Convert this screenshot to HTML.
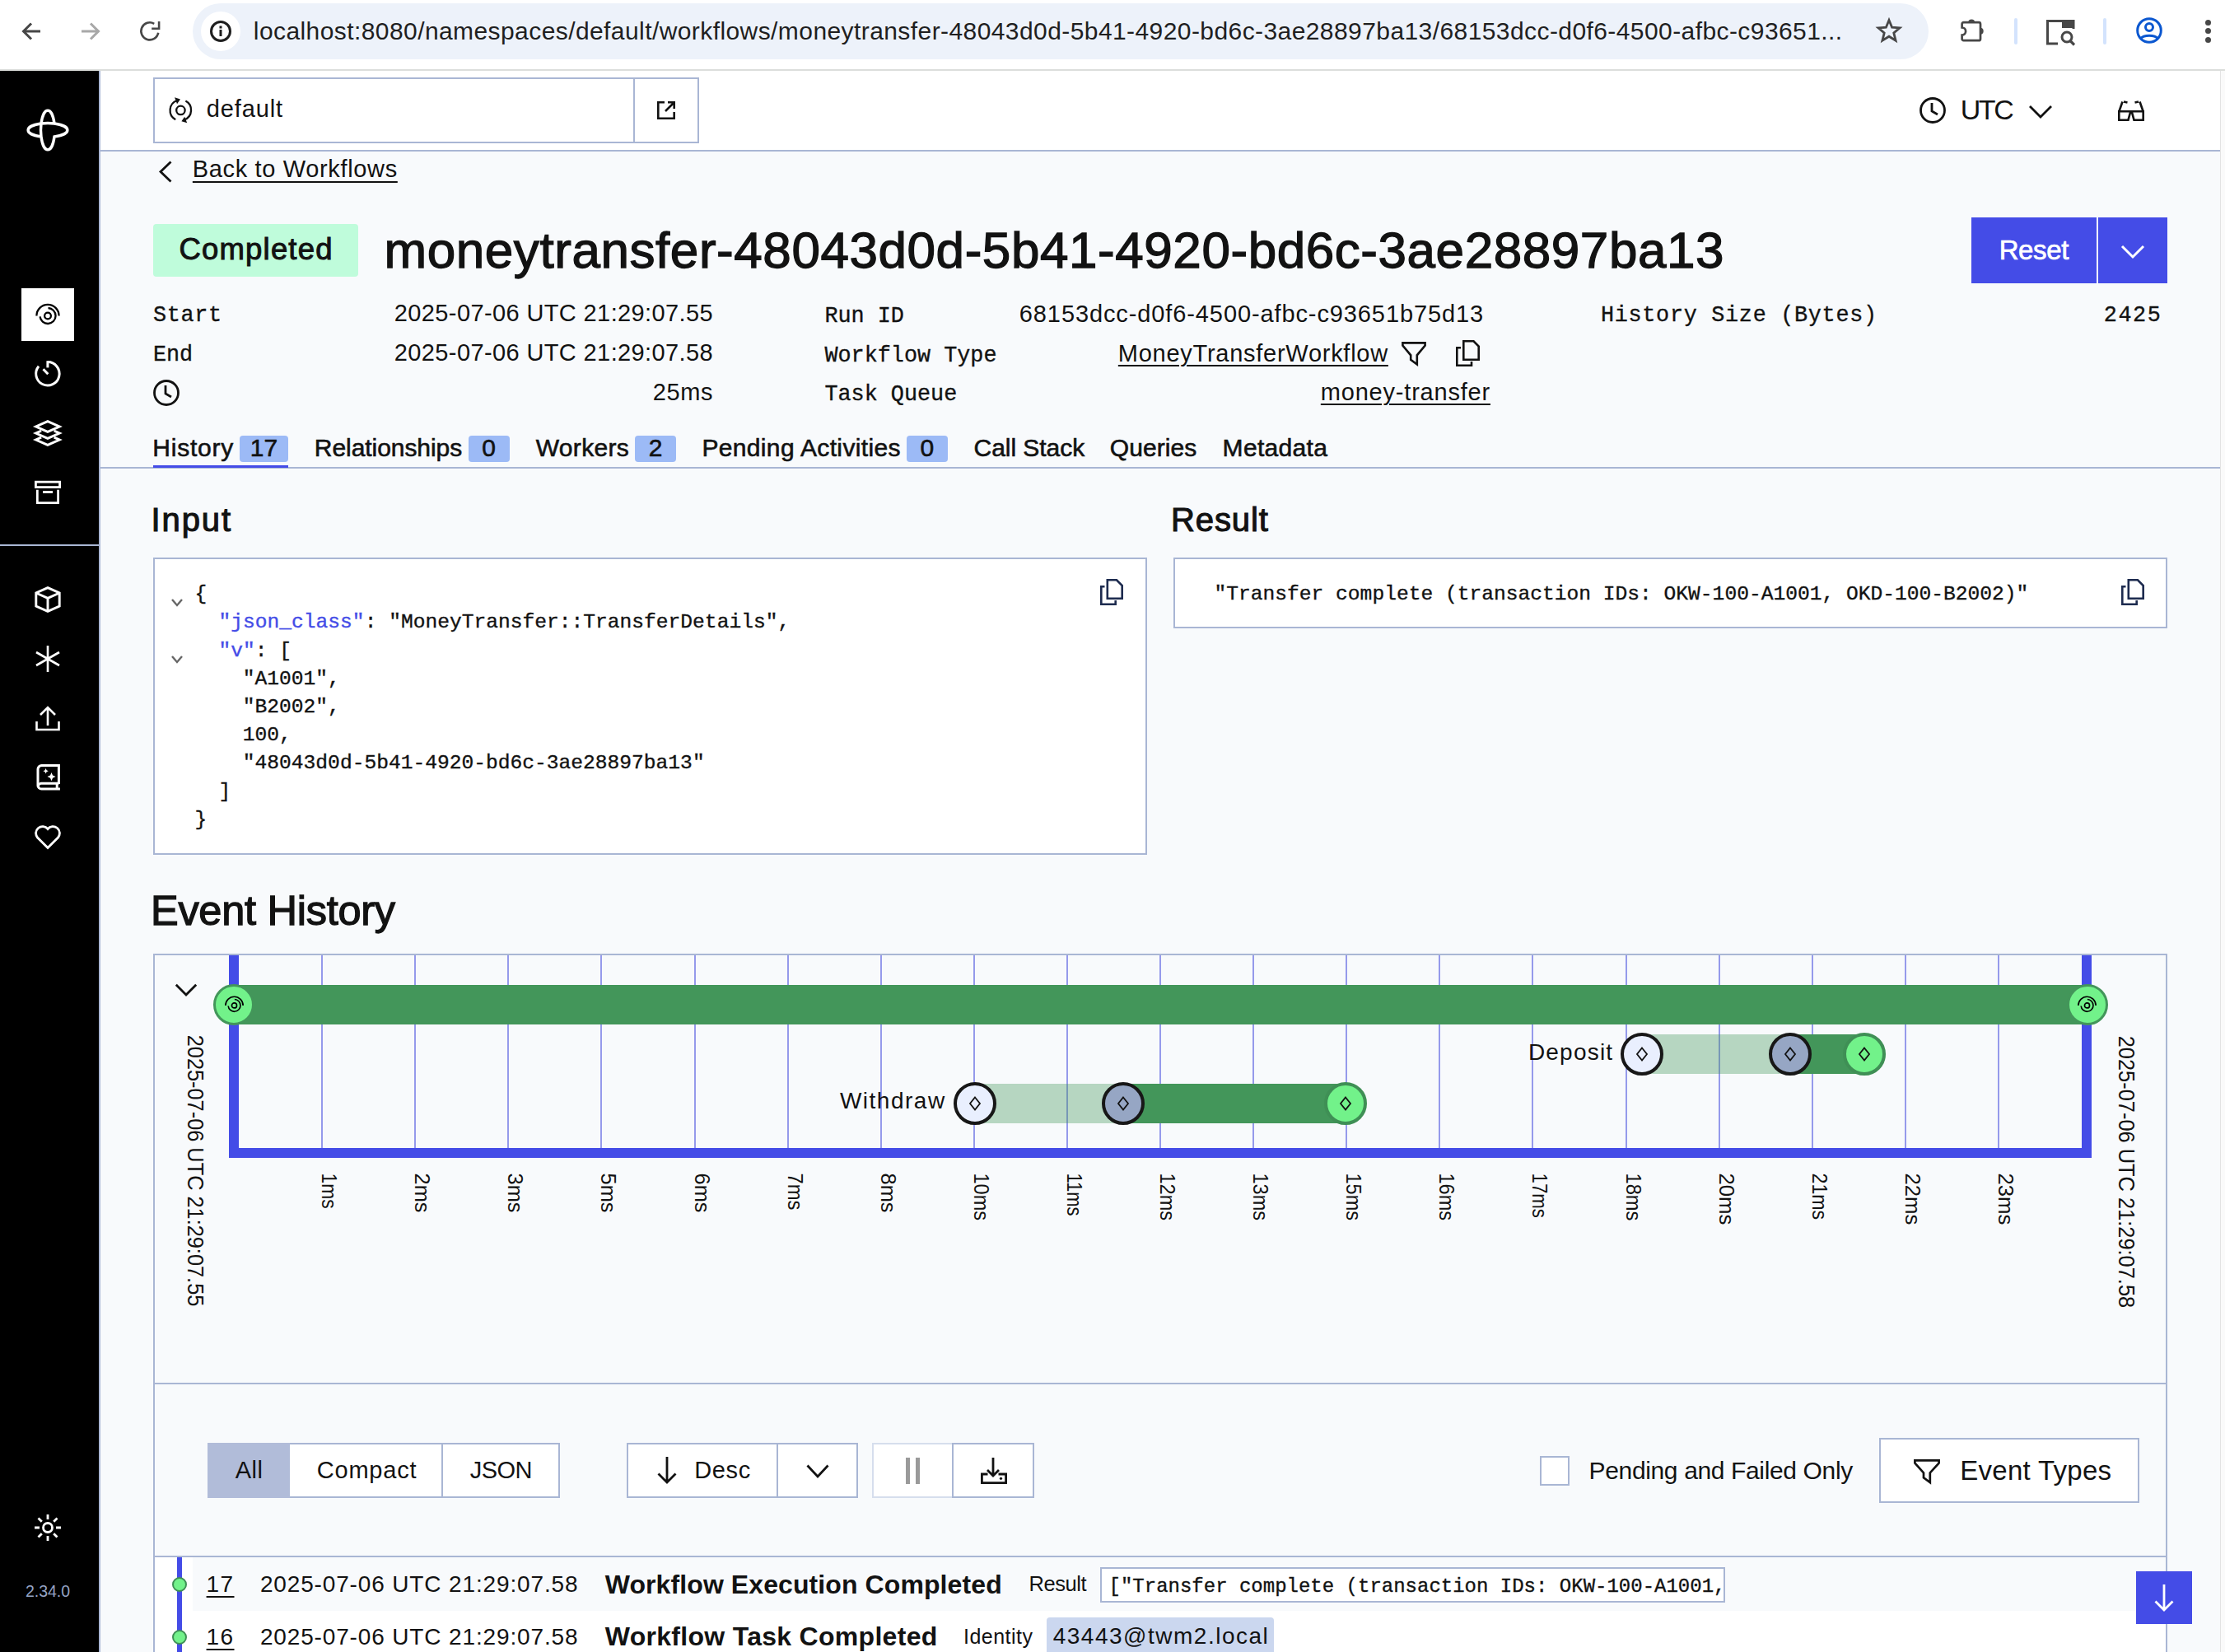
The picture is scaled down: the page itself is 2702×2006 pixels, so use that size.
<!DOCTYPE html>
<html><head><meta charset="utf-8"><title>Temporal</title><style>
html,body{margin:0;padding:0}
body{width:2702px;height:2006px;overflow:hidden;position:relative;background:#f8fafc;font-family:"Liberation Sans",sans-serif;color:#121212}
.a{position:absolute;box-sizing:border-box}
.t{position:absolute;white-space:pre;line-height:1}
svg{position:absolute;overflow:visible}

</style></head><body>
<!-- browser chrome -->
<div class="a" style="left:0;top:0;width:2702px;height:84px;background:#ffffff"></div>
<div class="a" style="left:0;top:84px;width:2702px;height:2px;background:#dcdedb"></div>
<svg style="left:26px;top:26px" width="24" height="24" viewBox="0 0 24 24"><path d="M23 12H3M12 2.5L2.5 12L12 21.5" fill="none" stroke="#474747" stroke-width="3"/></svg>
<svg style="left:98px;top:26px" width="24" height="24" viewBox="0 0 24 24"><path d="M1 12H21M12 2.5L21.5 12L12 21.5" fill="none" stroke="#a8a8a8" stroke-width="3"/></svg>
<svg style="left:170px;top:26px" width="24" height="24" viewBox="0 0 24 24"><path d="M22.2 13.7A10.5 10.5 0 1 1 17.2 2.8" fill="none" stroke="#474747" stroke-width="2.6"/><path d="M14.2 8.7H23.1V0" fill="none" stroke="#474747" stroke-width="2.6"/></svg>
<div class="a" style="left:234px;top:4px;width:2108px;height:68px;border-radius:34px;background:#edf2fa"></div>
<div class="a" style="left:244px;top:14px;width:48px;height:48px;border-radius:24px;background:#ffffff"></div>
<svg style="left:255px;top:25px" width="26" height="26" viewBox="0 0 26 26"><circle cx="13" cy="13" r="11.5" fill="none" stroke="#1f1f1f" stroke-width="3"/><rect x="11.5" y="11" width="3" height="8" fill="#1f1f1f"/><rect x="11.5" y="6.5" width="3" height="3" fill="#1f1f1f"/></svg>
<svg style="left:2279px;top:22px" width="30" height="30" viewBox="0 0 30 30"><path d="M15 2.5L18.6 11.2L28 11.9L20.8 18L23.1 27.2L15 22.2L6.9 27.2L9.2 18L2 11.9L11.4 11.2Z" fill="none" stroke="#474747" stroke-width="2.8" stroke-linejoin="miter"/></svg>
<svg style="left:2380px;top:20px" width="34" height="32" viewBox="0 0 34 32"><path d="M2.6 9.2A2 2 0 0 1 4.6 7.2H23A2 2 0 0 1 25 9.2V27.2A2 2 0 0 1 23 29.2H4.6A2 2 0 0 1 2.6 27.2V22.5A4.5 4.5 0 0 0 2.6 13.5Z" fill="none" stroke="#474747" stroke-width="2.7"/><path d="M10.2 7.5A4 4 0 0 1 18.2 7.5Z" fill="#474747"/><path d="M24.7 13.8A4 4 0 0 1 24.7 21.8Z" fill="#474747"/></svg>
<div class="a" style="left:2446px;top:22px;width:4px;height:32px;border-radius:2px;background:#d3e3fd"></div>
<svg style="left:2485px;top:24px" width="36" height="32" viewBox="0 0 36 32"><path d="M14 29H1.5V1.5H33V11" fill="none" stroke="#474747" stroke-width="3"/><rect x="19" y="0" width="14.5" height="10" fill="#474747"/><circle cx="25" cy="21" r="6" fill="none" stroke="#474747" stroke-width="3"/><path d="M29 25.5L34 30.5" stroke="#474747" stroke-width="3.2"/></svg>
<div class="a" style="left:2554px;top:22px;width:4px;height:32px;border-radius:2px;background:#d3e3fd"></div>
<svg style="left:2594px;top:21px" width="32" height="32" viewBox="0 0 32 32"><circle cx="16" cy="16" r="14.3" fill="none" stroke="#0b57d0" stroke-width="3"/><circle cx="16" cy="12" r="4.5" fill="none" stroke="#0b57d0" stroke-width="3"/><path d="M6 25.5C9 21 23 21 26 25.5" fill="none" stroke="#0b57d0" stroke-width="3"/></svg>
<div class="a" style="left:2678px;top:23.5px;width:7px;height:7px;border-radius:4px;background:#474747"></div>
<div class="a" style="left:2678px;top:33.5px;width:7px;height:7px;border-radius:4px;background:#474747"></div>
<div class="a" style="left:2678px;top:44.5px;width:7px;height:7px;border-radius:4px;background:#474747"></div>

<!-- sidebar -->
<div class="a" style="left:0;top:86px;width:120px;height:1920px;background:#000000"></div>
<div class="a" style="left:120px;top:86px;width:2px;height:1920px;background:#a9b6d4"></div>
<div class="a" style="left:0;top:661px;width:120px;height:2px;background:#a9b6d4"></div>
<svg style="left:34px;top:134px" width="48" height="48" viewBox="0 0 48 48"><path d="M16 16A8.5 24 0 0 1 32 16A24 8.5 0 0 1 32 32A8.5 24 0 0 1 16 32A24 8.5 0 0 1 16 16Z M16 16A8.5 24 0 0 0 16 32 M16 16A24 8.5 0 0 1 32 16" fill="none" stroke="#fff" stroke-width="3.4"/></svg>
<div class="a" style="left:26px;top:350px;width:64px;height:64px;background:#ffffff"></div>
<!-- workflows icon -->
<svg style="left:42px;top:367px" width="32" height="32" viewBox="0 0 32 32"><path d="M2.4 16.5A13.6 13.6 0 0 1 29.6 16.5" fill="none" stroke="#000" stroke-width="2.3"/><path d="M16.5 7A9.5 9.5 0 1 1 6.6 17.3" fill="none" stroke="#000" stroke-width="2.3"/><circle cx="16" cy="16.5" r="3.9" fill="none" stroke="#000" stroke-width="2.3"/></svg>
<!-- schedules -->
<svg style="left:42px;top:437px" width="32" height="32" viewBox="0 0 32 32"><path d="M15.9 2.6A14.2 14.2 0 1 1 5 7.7" fill="none" stroke="#fff" stroke-width="3"/><path d="M15.9 1.2V9.4" fill="none" stroke="#fff" stroke-width="3"/><path d="M10.5 11.3L16.3 17.3" fill="none" stroke="#fff" stroke-width="3"/></svg>
<!-- layers -->
<svg style="left:42px;top:509px" width="32" height="34" viewBox="0 0 32 34"><path d="M15.9 2.6L30.2 9L15.9 15.4L1.6 9Z" fill="none" stroke="#fff" stroke-width="3"/><path d="M8.1 14.1L1.6 17L15.9 23.4L30.2 17L23.7 14.1" fill="none" stroke="#fff" stroke-width="3"/><path d="M8.1 22.1L1.6 25L15.9 31.4L30.2 25L23.7 22.1" fill="none" stroke="#fff" stroke-width="3"/></svg>
<!-- archive -->
<svg style="left:42px;top:582px" width="32" height="32" viewBox="0 0 32 32"><rect x="1.4" y="3.2" width="29.2" height="6.4" fill="none" stroke="#fff" stroke-width="2.8"/><path d="M3.3 12.8V28.6H28.6V12.8" fill="none" stroke="#fff" stroke-width="2.8"/><path d="M10 15.5H22" stroke="#fff" stroke-width="2.8"/></svg>
<!-- cube -->
<svg style="left:42px;top:712px" width="32" height="32" viewBox="0 0 32 32"><path d="M16 1.6L30.2 8V24L16 30.4L1.8 24V8Z" fill="none" stroke="#fff" stroke-width="2.9" stroke-linejoin="miter"/><path d="M1.8 8L16 14.4L30.2 8M16 14.4V30.4" fill="none" stroke="#fff" stroke-width="2.9"/></svg>
<!-- asterisk -->
<svg style="left:42px;top:784px" width="32" height="32" viewBox="0 0 32 32"><path d="M16 0V32M2 8L30 24M2 24L30 8" stroke="#fff" stroke-width="2.6"/></svg>
<!-- upload -->
<svg style="left:42px;top:856px" width="32" height="32" viewBox="0 0 32 32"><path d="M16 25V3M7 12L16 3L25 12" fill="none" stroke="#fff" stroke-width="2.6"/><path d="M2.5 20V30H29.5V20" fill="none" stroke="#fff" stroke-width="2.6"/></svg>
<!-- book -->
<svg style="left:42px;top:927px" width="32" height="34" viewBox="0 0 32 34"><path d="M29.4 25V2.6H8.5A4.5 4.5 0 0 0 4 7.1V26.6A4.4 4.4 0 0 0 8.4 31H30.9" fill="none" stroke="#fff" stroke-width="3"/><path d="M4.2 28.2A3.8 3.8 0 0 1 8 24.3H29.4M27.2 24.3V31" fill="none" stroke="#fff" stroke-width="3"/><path d="M13.6 6L14.6 8.2L16.8 9.2L14.6 10.2L13.6 12.4L12.6 10.2L10.4 9.2L12.6 8.2Z" fill="#fff"/><path d="M20.5 11L22 14.5L25.5 16.1L22 17.7L20.5 21.2L19 17.7L15.5 16.1L19 14.5Z" fill="#fff"/></svg>
<!-- heart -->
<svg style="left:42px;top:1000px" width="32" height="32" viewBox="0 0 32 32"><path d="M16 29.5L3.5 17A7.8 7.8 0 0 1 16 6.5A7.8 7.8 0 0 1 28.5 17Z" fill="none" stroke="#fff" stroke-width="2.8" stroke-linejoin="miter"/></svg>
<!-- sun -->
<svg style="left:42px;top:1839px" width="32" height="32" viewBox="0 0 32 32"><circle cx="16" cy="16" r="5.5" fill="none" stroke="#fff" stroke-width="2.8"/><path d="M16 0V6M16 26V32M0 16H6M26 16H32M4.5 4.5L8.8 8.8M23.2 23.2L27.5 27.5M4.5 27.5L8.8 23.2M23.2 8.8L27.5 4.5" stroke="#fff" stroke-width="2.8"/></svg>

<!-- header -->
<div class="a" style="left:122px;top:86px;width:2574px;height:96px;background:#ffffff"></div>
<div class="a" style="left:122px;top:182px;width:2574px;height:2px;background:#a9b6d4"></div>
<div class="a" style="left:186px;top:94px;width:663px;height:80px;border:2px solid #a9b6d4;background:#fff"></div>
<div class="a" style="left:769px;top:94px;width:2px;height:80px;background:#a9b6d4"></div>
<svg style="left:200px;top:114px" width="40" height="40" viewBox="0 0 40 40"><circle cx="19.4" cy="19.9" r="5.2" fill="none" stroke="#121212" stroke-width="2.3"/><path d="M13.2 31.2A12.7 12.7 0 0 1 15.2 8" fill="none" stroke="#121212" stroke-width="2.3"/><path d="M12 4.2L19 6.4L15 12.2Z" fill="#121212"/><path d="M25.4 8.4A12.7 12.7 0 0 1 24 31.4" fill="none" stroke="#121212" stroke-width="2.3"/><path d="M20.4 33.2L27.2 35.2L24.2 27.8Z" fill="#121212"/></svg>
<svg style="left:798px;top:123px" width="22" height="22" viewBox="0 0 22 22"><path d="M9 1.3H1.3V20.7H20.7V13" fill="none" stroke="#121212" stroke-width="2.6"/><path d="M10 12L20.5 1.5M13 1.3H20.7V9" fill="none" stroke="#121212" stroke-width="2.6"/></svg>
<svg style="left:2331px;top:118px" width="32" height="32" viewBox="0 0 32 32"><circle cx="16" cy="16" r="14.5" fill="none" stroke="#121212" stroke-width="2.8"/><path d="M15 7V17L22 21" fill="none" stroke="#121212" stroke-width="2.8"/></svg>
<svg style="left:2464px;top:128px" width="28" height="16" viewBox="0 0 28 16"><path d="M1 1L14 14L27 1" fill="none" stroke="#121212" stroke-width="2.8"/></svg>
<svg style="left:2572px;top:122px" width="32" height="25" viewBox="0 0 32 25"><path d="M7 1.5L11.5 2.5M25 1.5L20.5 2.5M5.5 1.5L1.5 13M26.5 1.5L30.5 13" fill="none" stroke="#121212" stroke-width="2.6"/><path d="M1.3 13.3H30.7V23.7H19.5L17 14.5H15L12.5 23.7H1.3Z" fill="none" stroke="#121212" stroke-width="2.6"/></svg>
<!-- scrollbar -->
<div class="a" style="left:2696px;top:86px;width:6px;height:1920px;background:#fafafa;border-left:1px solid #e3e3e3"></div>

<!-- back chevron -->
<svg style="left:192px;top:195px" width="17" height="27" viewBox="0 0 17 27"><path d="M15.5 1.5L3 13.5L15.5 25.5" fill="none" stroke="#121212" stroke-width="2.8"/></svg>
<!-- completed badge -->
<div class="a" style="left:186px;top:272px;width:249px;height:64px;border-radius:4px;background:#bffcdb"></div>
<!-- reset -->
<div class="a" style="left:2394px;top:264px;width:152px;height:80px;background:#444ce7"></div>
<div class="a" style="left:2548px;top:264px;width:84px;height:80px;background:#444ce7"></div>
<svg style="left:2576px;top:298px" width="28" height="16" viewBox="0 0 28 16"><path d="M1 1L14 14L27 1" fill="none" stroke="#fff" stroke-width="3"/></svg>
<!-- details icons -->
<svg style="left:186px;top:461px" width="32" height="32" viewBox="0 0 32 32"><circle cx="16" cy="16" r="14.5" fill="none" stroke="#121212" stroke-width="2.8"/><path d="M15 7V17L22 21" fill="none" stroke="#121212" stroke-width="2.8"/></svg>
<svg style="left:1702px;top:415px" width="30" height="29" viewBox="0 0 30 29"><path d="M1.4 1.4H28.6V4.5L18.8 16.3V27.5L11.2 21.8V16.3L1.4 4.5Z" fill="none" stroke="#121212" stroke-width="2.6" stroke-linejoin="miter"/></svg>
<svg style="left:1768px;top:413px" width="29" height="32" viewBox="0 0 29 32"><path d="M9.3 1.3H21.5L27.7 7.5V23.7H9.3Z" fill="none" stroke="#121212" stroke-width="2.6"/><path d="M6 9.3H1.3V30.7H19V26" fill="none" stroke="#121212" stroke-width="2.6"/></svg>
<!-- tabs -->
<div class="a" style="left:291px;top:529px;width:59px;height:32px;border-radius:4px;background:#9cbaf6"></div>
<div class="a" style="left:569px;top:529px;width:49.5px;height:32px;border-radius:4px;background:#9cbaf6"></div>
<div class="a" style="left:771px;top:529px;width:50px;height:32px;border-radius:4px;background:#9cbaf6"></div>
<div class="a" style="left:1101px;top:529px;width:50px;height:32px;border-radius:4px;background:#9cbaf6"></div>
<div class="a" style="left:122px;top:567px;width:2574px;height:2px;background:#a9b6d4"></div>
<div class="a" style="left:186px;top:565px;width:164px;height:3px;background:#444ce7"></div>

<!-- input box -->
<div class="a" style="left:186px;top:677px;width:1207px;height:361px;border:2px solid #a9b6d4;background:#fff"></div>
<svg style="left:208px;top:727px" width="14" height="10" viewBox="0 0 14 10"><path d="M1 1L7 8L13 1" fill="none" stroke="#666" stroke-width="2.4"/></svg>
<svg style="left:208px;top:796px" width="14" height="10" viewBox="0 0 14 10"><path d="M1 1L7 8L13 1" fill="none" stroke="#666" stroke-width="2.4"/></svg>
<svg style="left:1336px;top:703px" width="28" height="32" viewBox="0 0 28 32"><path d="M8.8 1.3H20L26.7 8V23.7H8.8Z" fill="none" stroke="#1d2b4f" stroke-width="2.6"/><path d="M5.5 9.3H1.3V30.7H18.7V26" fill="none" stroke="#1d2b4f" stroke-width="2.6"/></svg>
<!-- result box -->
<div class="a" style="left:1425px;top:677px;width:1207px;height:86px;border:2px solid #a9b6d4;background:#fff"></div>
<svg style="left:2576px;top:703px" width="28" height="32" viewBox="0 0 28 32"><path d="M8.8 1.3H20L26.7 8V23.7H8.8Z" fill="none" stroke="#1d2b4f" stroke-width="2.6"/><path d="M5.5 9.3H1.3V30.7H18.7V26" fill="none" stroke="#1d2b4f" stroke-width="2.6"/></svg>

<!-- event history container -->
<div class="a" style="left:186px;top:1158px;width:2446px;height:900px;border:2px solid #a9b6d4;background:#f8fafc"></div>
<svg style="left:212px;top:1194px" width="28" height="17" viewBox="0 0 28 17"><path d="M1.8 1.8L14 14L26.2 1.8" fill="none" stroke="#121212" stroke-width="2.8"/></svg>
<div class="a" style="left:390.1px;top:1160px;width:2px;height:234px;background:#959aeb"></div>
<div class="a" style="left:503.2px;top:1160px;width:2px;height:234px;background:#959aeb"></div>
<div class="a" style="left:616.3px;top:1160px;width:2px;height:234px;background:#959aeb"></div>
<div class="a" style="left:729.4px;top:1160px;width:2px;height:234px;background:#959aeb"></div>
<div class="a" style="left:842.5px;top:1160px;width:2px;height:234px;background:#959aeb"></div>
<div class="a" style="left:955.6px;top:1160px;width:2px;height:234px;background:#959aeb"></div>
<div class="a" style="left:1068.7px;top:1160px;width:2px;height:234px;background:#959aeb"></div>
<div class="a" style="left:1181.8px;top:1160px;width:2px;height:234px;background:#959aeb"></div>
<div class="a" style="left:1294.9px;top:1160px;width:2px;height:234px;background:#959aeb"></div>
<div class="a" style="left:1408.0px;top:1160px;width:2px;height:234px;background:#959aeb"></div>
<div class="a" style="left:1521.1px;top:1160px;width:2px;height:234px;background:#959aeb"></div>
<div class="a" style="left:1634.2px;top:1160px;width:2px;height:234px;background:#959aeb"></div>
<div class="a" style="left:1747.3px;top:1160px;width:2px;height:234px;background:#959aeb"></div>
<div class="a" style="left:1860.4px;top:1160px;width:2px;height:234px;background:#959aeb"></div>
<div class="a" style="left:1973.5px;top:1160px;width:2px;height:234px;background:#959aeb"></div>
<div class="a" style="left:2086.6px;top:1160px;width:2px;height:234px;background:#959aeb"></div>
<div class="a" style="left:2199.7px;top:1160px;width:2px;height:234px;background:#959aeb"></div>
<div class="a" style="left:2312.8px;top:1160px;width:2px;height:234px;background:#959aeb"></div>
<div class="a" style="left:2425.9px;top:1160px;width:2px;height:234px;background:#959aeb"></div>
<div class="a" style="left:278px;top:1160px;width:12px;height:246px;background:#444ce7"></div>
<div class="a" style="left:278px;top:1394px;width:2262px;height:12px;background:#444ce7"></div>
<div class="a" style="left:2528px;top:1160px;width:12px;height:246px;background:#444ce7"></div>
<div class="a" style="left:284px;top:1196px;width:2251px;height:48px;background:#43965a"></div>
<div class="a" style="left:1184px;top:1316px;width:180px;height:48px;background:rgba(67,150,90,0.36)"></div>
<div class="a" style="left:1364px;top:1316px;width:270px;height:48px;background:#43965a"></div>
<div class="a" style="left:1994px;top:1256px;width:180px;height:48px;background:rgba(67,150,90,0.36)"></div>
<div class="a" style="left:2174px;top:1256px;width:90px;height:48px;background:#43965a"></div>
<div class="a" style="left:259.0px;top:1195.0px;width:50px;height:50px;border-radius:50%;background:#72f28a;border:3.5px solid #43965a"></div><svg style="left:271.5px;top:1207.5px" width="25" height="25" viewBox="0 0 32 32"><path d="M2.4 16.5A13.6 13.6 0 0 1 29.6 16.5" fill="none" stroke="#000" stroke-width="2.1"/><path d="M16.5 7A9.5 9.5 0 1 1 6.6 17.3" fill="none" stroke="#000" stroke-width="2.1"/><circle cx="16" cy="16.5" r="3.9" fill="none" stroke="#000" stroke-width="2.1"/></svg>
<div class="a" style="left:2509.5px;top:1195.0px;width:50px;height:50px;border-radius:50%;background:#72f28a;border:3.5px solid #43965a"></div><svg style="left:2522.0px;top:1207.5px" width="25" height="25" viewBox="0 0 32 32"><path d="M2.4 16.5A13.6 13.6 0 0 1 29.6 16.5" fill="none" stroke="#000" stroke-width="2.1"/><path d="M16.5 7A9.5 9.5 0 1 1 6.6 17.3" fill="none" stroke="#000" stroke-width="2.1"/><circle cx="16" cy="16.5" r="3.9" fill="none" stroke="#000" stroke-width="2.1"/></svg>
<div class="a" style="left:1158.0px;top:1314.0px;width:52px;height:52px;border-radius:50%;background:#e9effe;border:4.0px solid #171717"></div><svg style="left:1176.0px;top:1331.0px" width="16" height="18" viewBox="0 0 16 18"><path d="M8 1.5L14 9L8 16.5L2 9Z" fill="none" stroke="#121212" stroke-width="1.8"/></svg>
<div class="a" style="left:1338.0px;top:1314.0px;width:52px;height:52px;border-radius:50%;background:#96a6c4;border:4.0px solid #171717"></div><svg style="left:1356.0px;top:1331.0px" width="16" height="18" viewBox="0 0 16 18"><path d="M8 1.5L14 9L8 16.5L2 9Z" fill="none" stroke="#121212" stroke-width="1.8"/></svg>
<div class="a" style="left:1608.0px;top:1314.0px;width:52px;height:52px;border-radius:50%;background:#72f28a;border:4.0px solid #3f8f55"></div><svg style="left:1626.0px;top:1331.0px" width="16" height="18" viewBox="0 0 16 18"><path d="M8 1.5L14 9L8 16.5L2 9Z" fill="none" stroke="#121212" stroke-width="1.8"/></svg>
<div class="a" style="left:1968.0px;top:1254.0px;width:52px;height:52px;border-radius:50%;background:#e9effe;border:4.0px solid #171717"></div><svg style="left:1986.0px;top:1271.0px" width="16" height="18" viewBox="0 0 16 18"><path d="M8 1.5L14 9L8 16.5L2 9Z" fill="none" stroke="#121212" stroke-width="1.8"/></svg>
<div class="a" style="left:2148.0px;top:1254.0px;width:52px;height:52px;border-radius:50%;background:#96a6c4;border:4.0px solid #171717"></div><svg style="left:2166.0px;top:1271.0px" width="16" height="18" viewBox="0 0 16 18"><path d="M8 1.5L14 9L8 16.5L2 9Z" fill="none" stroke="#121212" stroke-width="1.8"/></svg>
<div class="a" style="left:2238.0px;top:1254.0px;width:52px;height:52px;border-radius:50%;background:#72f28a;border:4.0px solid #3f8f55"></div><svg style="left:2256.0px;top:1271.0px" width="16" height="18" viewBox="0 0 16 18"><path d="M8 1.5L14 9L8 16.5L2 9Z" fill="none" stroke="#121212" stroke-width="1.8"/></svg>
<div class="a" style="left:186px;top:1679px;width:2446px;height:2px;background:#a9b6d4"></div>
<div class="a" style="left:252px;top:1752px;width:428px;height:67px;border:2px solid #a9b6d4;background:#fff"></div>
<div class="a" style="left:252px;top:1752px;width:100px;height:67px;background:#b1bcd9"></div>
<div class="a" style="left:536px;top:1752px;width:2px;height:67px;background:#a9b6d4"></div>
<div class="a" style="left:761px;top:1752px;width:281px;height:67px;border:2px solid #a9b6d4;background:#fff"></div>
<div class="a" style="left:943px;top:1752px;width:2px;height:67px;background:#a9b6d4"></div>
<svg style="left:798px;top:1769px" width="24" height="33" viewBox="0 0 24 33"><path d="M12 0V31M1.5 20.5L12 31L22.5 20.5" fill="none" stroke="#121212" stroke-width="2.8"/></svg>
<svg style="left:979px;top:1778px" width="28" height="18" viewBox="0 0 28 18"><path d="M1.5 1.5L14 15L26.5 1.5" fill="none" stroke="#121212" stroke-width="2.8"/></svg>
<div class="a" style="left:1059px;top:1752px;width:197px;height:67px;border:2px solid #d6deed;background:#fff"></div>
<div class="a" style="left:1156px;top:1752px;width:100px;height:67px;border:2px solid #a9b6d4;background:#fff"></div>
<div class="a" style="left:1100px;top:1770px;width:5px;height:32px;background:#9a9a9a"></div>
<div class="a" style="left:1112px;top:1770px;width:5px;height:32px;background:#9a9a9a"></div>
<svg style="left:1191px;top:1770px" width="32" height="32" viewBox="0 0 32 32"><path d="M15 0V22M8 15L15 22L22 15" fill="none" stroke="#121212" stroke-width="2.8"/><path d="M8.5 20H1.4V30.6H30.6V20H21.5" fill="none" stroke="#121212" stroke-width="2.8"/><circle cx="24.5" cy="25.3" r="1.6" fill="#121212"/></svg>
<div class="a" style="left:1870px;top:1768px;width:36px;height:36px;border:2px solid #a9b6d4;background:#fff"></div>
<div class="a" style="left:2282px;top:1746px;width:316px;height:79px;border:2px solid #a9b6d4;background:#fff"></div>
<svg style="left:2324px;top:1772px" width="32" height="30" viewBox="0 0 32 30"><path d="M1.4 1.4H30.6V4.6L19.8 16.4V28L12 22.4V16.4L1.4 4.6Z" fill="none" stroke="#121212" stroke-width="2.7"/></svg>
<div class="a" style="left:186px;top:1889px;width:2446px;height:2px;background:#a9b6d4"></div>
<div class="a" style="left:188px;top:1891px;width:2442px;height:120px;background:#ffffff"></div>
<div class="a" style="left:234px;top:1891px;width:2396px;height:65px;background:#f8fafc"></div>
<div class="a" style="left:215px;top:1891px;width:6px;height:120px;background:#444ce7"></div>
<div class="a" style="left:209px;top:1915px;width:18px;height:18px;border-radius:9px;background:#72f28a;border:2px solid #3f8f55"></div>
<div class="a" style="left:209px;top:1979px;width:18px;height:18px;border-radius:9px;background:#72f28a;border:2px solid #3f8f55"></div>
<div class="a" style="left:1336px;top:1903px;width:759px;height:43px;border:2px solid #a9b6d4;background:#fff;overflow:hidden"></div>
<div class="a" style="left:1271px;top:1964px;width:276px;height:60px;border-radius:4px;background:#cbd7ef"></div>
<div class="a" style="left:2594px;top:1908px;width:68px;height:64px;background:#444ce7"></div>
<svg style="left:2616px;top:1924px" width="24" height="33" viewBox="0 0 24 33"><path d="M12 0V31M1.5 20.5L12 31L22.5 20.5" fill="none" stroke="#fff" stroke-width="2.8"/></svg>

<div id="texts">
<span class="t" style="left:307.80px;top:22.60px;font-size:30.00px;color:#1f1f1f;letter-spacing:0.418px;">localhost:8080/namespaces/default/workflows/moneytransfer-48043d0d-5b41-4920-bd6c-3ae28897ba13/68153dcc-d0f6-4500-afbc-c93651...</span>
<span class="t" style="left:250.84px;top:118.45px;font-size:29.00px;letter-spacing:0.874px;">default</span>
<span class="t" style="left:2380.64px;top:116.21px;font-size:34.00px;letter-spacing:-2.335px;">UTC</span>
<span class="t" style="left:233.84px;top:191.05px;font-size:29.00px;letter-spacing:0.646px;text-decoration:underline;text-underline-offset:5px;text-decoration-thickness:2px;">Back to Workflows</span>
<span class="t" style="left:217.54px;top:285.10px;font-size:36.50px;letter-spacing:1.176px;-webkit-text-stroke:1px #121212;">Completed</span>
<span class="t" style="left:466.52px;top:273.10px;font-size:62.00px;letter-spacing:0.562px;-webkit-text-stroke:1.3px #121212;">moneytransfer-48043d0d-5b41-4920-bd6c-3ae28897ba13</span>
<span class="t" style="left:2427.68px;top:286.66px;font-size:33.00px;color:#ffffff;letter-spacing:-0.395px;-webkit-text-stroke:0.7px #ffffff;">Reset</span>
<span class="t" style="left:185.93px;top:370.47px;font-size:26.80px;font-family:'Liberation Mono', monospace;-webkit-text-stroke:0.35px #121212;letter-spacing:0.684px;">Start</span>
<span class="t" style="left:185.93px;top:418.47px;font-size:26.80px;font-family:'Liberation Mono', monospace;-webkit-text-stroke:0.35px #121212;">End</span>
<span class="t" style="left:478.84px;top:366.45px;font-size:29.00px;letter-spacing:0.382px;">2025-07-06 UTC 21:29:07.55</span>
<span class="t" style="left:478.84px;top:414.45px;font-size:29.00px;letter-spacing:0.382px;">2025-07-06 UTC 21:29:07.58</span>
<span class="t" style="left:792.84px;top:462.25px;font-size:29.00px;letter-spacing:0.566px;">25ms</span>
<span class="t" style="left:1001.43px;top:371.47px;font-size:26.80px;font-family:'Liberation Mono', monospace;-webkit-text-stroke:0.35px #121212;">Run ID</span>
<span class="t" style="left:1001.43px;top:419.47px;font-size:26.80px;font-family:'Liberation Mono', monospace;-webkit-text-stroke:0.35px #121212;">Workflow Type</span>
<span class="t" style="left:1001.43px;top:466.47px;font-size:26.80px;font-family:'Liberation Mono', monospace;-webkit-text-stroke:0.35px #121212;">Task Queue</span>
<span class="t" style="left:1237.84px;top:367.45px;font-size:29.00px;letter-spacing:0.892px;">68153dcc-d0f6-4500-afbc-c93651b75d13</span>
<span class="t" style="left:1357.84px;top:415.45px;font-size:29.00px;letter-spacing:0.733px;text-decoration:underline;text-underline-offset:4px;text-decoration-thickness:2px;">MoneyTransferWorkflow</span>
<span class="t" style="left:1603.84px;top:462.45px;font-size:29.00px;letter-spacing:0.793px;text-decoration:underline;text-underline-offset:4px;text-decoration-thickness:2px;">money-transfer</span>
<span class="t" style="left:1943.93px;top:370.47px;font-size:26.80px;font-family:'Liberation Mono', monospace;-webkit-text-stroke:0.35px #121212;letter-spacing:0.712px;">History Size (Bytes)</span>
<span class="t" style="left:2554.73px;top:370.47px;font-size:26.80px;font-family:'Liberation Mono', monospace;-webkit-text-stroke:0.35px #121212;letter-spacing:1.605px;">2425</span>
<span class="t" style="left:185.30px;top:529.30px;font-size:30.00px;letter-spacing:0.759px;-webkit-text-stroke:0.6px #121212;">History</span>
<span class="t" style="left:381.80px;top:529.30px;font-size:30.00px;letter-spacing:-0.059px;-webkit-text-stroke:0.6px #121212;">Relationships</span>
<span class="t" style="left:650.80px;top:529.30px;font-size:30.00px;letter-spacing:0.296px;-webkit-text-stroke:0.6px #121212;">Workers</span>
<span class="t" style="left:852.40px;top:529.30px;font-size:30.00px;letter-spacing:0.351px;-webkit-text-stroke:0.6px #121212;">Pending Activities</span>
<span class="t" style="left:1182.50px;top:529.30px;font-size:30.00px;letter-spacing:-0.039px;-webkit-text-stroke:0.6px #121212;">Call Stack</span>
<span class="t" style="left:1347.80px;top:529.30px;font-size:30.00px;letter-spacing:0.059px;-webkit-text-stroke:0.6px #121212;">Queries</span>
<span class="t" style="left:1484.60px;top:529.30px;font-size:30.00px;letter-spacing:0.315px;-webkit-text-stroke:0.6px #121212;">Metadata</span>
<span class="t" style="left:303.81px;top:529.30px;font-size:30.00px;-webkit-text-stroke:0.6px #121212;">17</span>
<span class="t" style="left:585.36px;top:529.30px;font-size:30.00px;-webkit-text-stroke:0.6px #121212;">0</span>
<span class="t" style="left:787.66px;top:529.30px;font-size:30.00px;-webkit-text-stroke:0.6px #121212;">2</span>
<span class="t" style="left:1117.46px;top:529.30px;font-size:30.00px;-webkit-text-stroke:0.6px #121212;">0</span>
<span class="t" style="left:183.40px;top:610.73px;font-size:40.00px;letter-spacing:1.958px;-webkit-text-stroke:1.1px #121212;">Input</span>
<span class="t" style="left:1422.00px;top:610.73px;font-size:40.00px;letter-spacing:0.882px;-webkit-text-stroke:1.1px #121212;">Result</span>
<span class="t" style="left:182.98px;top:1080.64px;font-size:50.50px;letter-spacing:-0.271px;-webkit-text-stroke:1.3px #121212;">Event History</span>
<span class="t" style="left:236.52px;top:709.75px;font-size:24.60px;font-family:'Liberation Mono', monospace;-webkit-text-stroke:0.35px #121212;">{</span>
<span class="t" style="left:265.52px;top:743.95px;font-size:24.60px;font-family:'Liberation Mono', monospace;-webkit-text-stroke:0.35px #444ce7;color:#444ce7;">"json_class"</span>
<span class="t" style="left:442.64px;top:743.95px;font-size:24.60px;font-family:'Liberation Mono', monospace;-webkit-text-stroke:0.35px #121212;">: "MoneyTransfer::TransferDetails",</span>
<span class="t" style="left:265.52px;top:778.65px;font-size:24.60px;font-family:'Liberation Mono', monospace;-webkit-text-stroke:0.35px #444ce7;color:#444ce7;">"v"</span>
<span class="t" style="left:309.80px;top:778.65px;font-size:24.60px;font-family:'Liberation Mono', monospace;-webkit-text-stroke:0.35px #121212;">: [</span>
<span class="t" style="left:294.82px;top:812.65px;font-size:24.60px;font-family:'Liberation Mono', monospace;-webkit-text-stroke:0.35px #121212;">"A1001",</span>
<span class="t" style="left:294.82px;top:846.95px;font-size:24.60px;font-family:'Liberation Mono', monospace;-webkit-text-stroke:0.35px #121212;">"B2002",</span>
<span class="t" style="left:294.82px;top:881.15px;font-size:24.60px;font-family:'Liberation Mono', monospace;-webkit-text-stroke:0.35px #121212;">100,</span>
<span class="t" style="left:294.82px;top:915.45px;font-size:24.60px;font-family:'Liberation Mono', monospace;-webkit-text-stroke:0.35px #121212;">"48043d0d-5b41-4920-bd6c-3ae28897ba13"</span>
<span class="t" style="left:265.52px;top:949.75px;font-size:24.60px;font-family:'Liberation Mono', monospace;-webkit-text-stroke:0.35px #121212;">]</span>
<span class="t" style="left:236.52px;top:984.05px;font-size:24.60px;font-family:'Liberation Mono', monospace;-webkit-text-stroke:0.35px #121212;">}</span>
<span class="t" style="left:1474.52px;top:710.15px;font-size:24.60px;font-family:'Liberation Mono', monospace;-webkit-text-stroke:0.35px #121212;">"Transfer complete (transaction IDs: OKW-100-A1001, OKD-100-B2002)"</span>
<span class="t" style="left:1019.88px;top:1323.29px;font-size:28.00px;letter-spacing:1.505px;">Withdraw</span>
<span class="t" style="left:1855.88px;top:1264.29px;font-size:28.00px;letter-spacing:1.217px;">Deposit</span>
<span class="t" style="left:390.10px;top:1402.28px;transform-origin:0 22.52px;transform:rotate(90deg) scaleX(0.8603);font-size:26.60px;">1ms</span>
<span class="t" style="left:503.20px;top:1402.28px;transform-origin:0 22.52px;transform:rotate(90deg) scaleX(0.9559);font-size:26.60px;">2ms</span>
<span class="t" style="left:616.30px;top:1402.28px;transform-origin:0 22.52px;transform:rotate(90deg) scaleX(0.9559);font-size:26.60px;">3ms</span>
<span class="t" style="left:729.40px;top:1402.28px;transform-origin:0 22.52px;transform:rotate(90deg) scaleX(0.9559);font-size:26.60px;">5ms</span>
<span class="t" style="left:842.50px;top:1402.28px;transform-origin:0 22.52px;transform:rotate(90deg) scaleX(0.9559);font-size:26.60px;">6ms</span>
<span class="t" style="left:955.60px;top:1402.28px;transform-origin:0 22.52px;transform:rotate(90deg) scaleX(0.8936);font-size:26.60px;">7ms</span>
<span class="t" style="left:1068.70px;top:1402.28px;transform-origin:0 22.52px;transform:rotate(90deg) scaleX(0.9559);font-size:26.60px;">8ms</span>
<span class="t" style="left:1181.80px;top:1402.28px;transform-origin:0 22.52px;transform:rotate(90deg) scaleX(0.8855);font-size:26.60px;">10ms</span>
<span class="t" style="left:1294.90px;top:1402.28px;transform-origin:0 22.52px;transform:rotate(90deg) scaleX(0.8255);font-size:26.60px;">11ms</span>
<span class="t" style="left:1408.00px;top:1402.28px;transform-origin:0 22.52px;transform:rotate(90deg) scaleX(0.8855);font-size:26.60px;">12ms</span>
<span class="t" style="left:1521.10px;top:1402.28px;transform-origin:0 22.52px;transform:rotate(90deg) scaleX(0.8855);font-size:26.60px;">13ms</span>
<span class="t" style="left:1634.20px;top:1402.28px;transform-origin:0 22.52px;transform:rotate(90deg) scaleX(0.8855);font-size:26.60px;">15ms</span>
<span class="t" style="left:1747.30px;top:1402.28px;transform-origin:0 22.52px;transform:rotate(90deg) scaleX(0.8855);font-size:26.60px;">16ms</span>
<span class="t" style="left:1860.40px;top:1402.28px;transform-origin:0 22.52px;transform:rotate(90deg) scaleX(0.8378);font-size:26.60px;">17ms</span>
<span class="t" style="left:1973.50px;top:1402.28px;transform-origin:0 22.52px;transform:rotate(90deg) scaleX(0.8903);font-size:26.60px;">18ms</span>
<span class="t" style="left:2086.60px;top:1402.28px;transform-origin:0 22.52px;transform:rotate(90deg) scaleX(0.9666);font-size:26.60px;">20ms</span>
<span class="t" style="left:2199.70px;top:1402.28px;transform-origin:0 22.52px;transform:rotate(90deg) scaleX(0.8696);font-size:26.60px;">21ms</span>
<span class="t" style="left:2312.80px;top:1402.28px;transform-origin:0 22.52px;transform:rotate(90deg) scaleX(0.9666);font-size:26.60px;">22ms</span>
<span class="t" style="left:2425.90px;top:1402.28px;transform-origin:0 22.52px;transform:rotate(90deg) scaleX(0.9666);font-size:26.60px;">23ms</span>
<span class="t" style="left:227.00px;top:1233.29px;transform-origin:0 23.71px;transform:rotate(90deg) scaleX(0.9049);font-size:28.00px;">2025-07-06 UTC 21:29:07.55</span>
<span class="t" style="left:2572.00px;top:1233.69px;transform-origin:0 23.71px;transform:rotate(90deg) scaleX(0.9072);font-size:28.00px;">2025-07-06 UTC 21:29:07.58</span>
<span class="t" style="left:285.64px;top:1770.95px;font-size:29.00px;letter-spacing:0.543px;">All</span>
<span class="t" style="left:384.74px;top:1770.95px;font-size:29.00px;letter-spacing:0.796px;">Compact</span>
<span class="t" style="left:570.84px;top:1770.95px;font-size:29.00px;letter-spacing:-0.541px;">JSON</span>
<span class="t" style="left:843.24px;top:1770.95px;font-size:29.00px;letter-spacing:0.614px;">Desc</span>
<span class="t" style="left:1929.60px;top:1770.60px;font-size:30.00px;letter-spacing:-0.362px;">Pending and Failed Only</span>
<span class="t" style="left:2380.18px;top:1768.86px;font-size:33.00px;letter-spacing:0.292px;">Event Types</span>
<span class="t" style="left:250.58px;top:1910.29px;font-size:28.00px;letter-spacing:1.384px;text-decoration:underline;text-underline-offset:5px;text-decoration-thickness:2px;">17</span>
<span class="t" style="left:315.88px;top:1910.29px;font-size:28.00px;letter-spacing:0.856px;">2025-07-06 UTC 21:29:07.58</span>
<span class="t" style="left:734.72px;top:1907.91px;font-size:32.00px;font-weight:700;letter-spacing:0.093px;">Workflow Execution Completed</span>
<span class="t" style="left:1249.48px;top:1910.81px;font-size:25.50px;letter-spacing:-0.408px;">Result</span>
<span class="t" style="left:1346.54px;top:1914.81px;font-size:24.00px;font-family:'Liberation Mono', monospace;-webkit-text-stroke:0.35px #121212;clip-path:inset(-20px 247.3px -20px -20px);">["Transfer complete (transaction IDs: OKW-100-A1001, OKD-100-B2002)"]</span>
<span class="t" style="left:250.58px;top:1973.99px;font-size:28.00px;letter-spacing:1.384px;text-decoration:underline;text-underline-offset:5px;text-decoration-thickness:2px;">16</span>
<span class="t" style="left:315.88px;top:1973.99px;font-size:28.00px;letter-spacing:0.856px;">2025-07-06 UTC 21:29:07.58</span>
<span class="t" style="left:734.72px;top:1971.31px;font-size:32.00px;font-weight:700;letter-spacing:0.294px;">Workflow Task Completed</span>
<span class="t" style="left:1170.00px;top:1974.53px;font-size:25.00px;letter-spacing:0.484px;">Identity</span>
<span class="t" style="left:1278.68px;top:1973.49px;font-size:28.00px;letter-spacing:1.506px;">43443@twm2.local</span>
<span class="t" style="left:30.89px;top:1922.99px;font-size:19.50px;color:#94a3c4;">2.34.0</span>
</div>
</body></html>
